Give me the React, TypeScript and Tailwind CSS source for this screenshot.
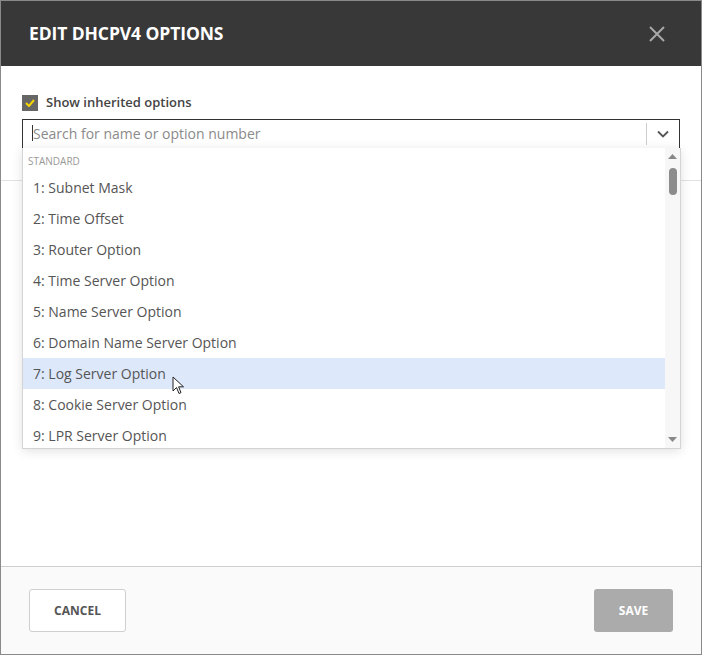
import React from "react";

const items = [
  "1: Subnet Mask",
  "2: Time Offset",
  "3: Router Option",
  "4: Time Server Option",
  "5: Name Server Option",
  "6: Domain Name Server Option",
  "7: Log Server Option",
  "8: Cookie Server Option",
  "9: LPR Server Option",
];

export default function App() {
  return (
    <div
      className="w-[702px] h-[655px] flex flex-col border border-[#8a8a8a] bg-white overflow-hidden"
      style={{ fontFamily: '"Open Sans", "Noto Sans", sans-serif' }}
    >
      <div className="h-[65px] bg-[#383838] flex items-center justify-between pl-[28px] pr-[36px] shrink-0">
        <div className="text-white text-[17.5px] font-bold tracking-[-0.1px]">EDIT DHCPV4 OPTIONS</div>
        <svg width="16" height="16" viewBox="0 0 16 16">
          <path d="M1 1L15 15M15 1L1 15" stroke="#a8a8a8" strokeWidth="2" />
        </svg>
      </div>
      <div className="flex-1 relative">
        <div className="pl-[21px] pr-[21px] pt-[28px]">
          <div className="flex items-center gap-[8px] h-[17px]">
            <div className="w-[16px] h-[16px] bg-[#666] flex items-center justify-center mt-[1px]">
              <svg width="10" height="8" viewBox="0 0 10 8">
                <path d="M1 4L4 7L9 1" stroke="#f5d400" strokeWidth="2" fill="none" />
              </svg>
            </div>
            <span className="text-[13px] font-semibold text-[#444] mt-[1px]">Show inherited options</span>
          </div>
          <div className="mt-[8px] h-[30px] border border-[#333] flex items-center">
            <div className="flex-1 flex items-center pl-[9px] pb-[2px]">
              <div className="w-[1px] h-[16px] bg-[#333]" />
              <span className="text-[14px] text-[#8a8a8a]">Search for name or option number</span>
            </div>
            <div className="w-[1px] h-[22px] bg-[#ccc]" />
            <div className="w-[32px] flex items-center justify-center">
              <svg width="12" height="8" viewBox="0 0 12 8">
                <path d="M1 1.5L6 6.5L11 1.5" stroke="#555" strokeWidth="1.8" fill="none" />
              </svg>
            </div>
          </div>
          <div className="mt-[31px] -mx-[21px] h-[1px] bg-[#e2e2e2]" />
        </div>

        <div className="absolute left-[21px] top-[82px] w-[659px] h-[301px] bg-white border border-[#d4d4d4] border-t-0 shadow-[0_2px_10px_rgba(0,0,0,0.12)] flex overflow-hidden">
          <div className="flex-1 flex flex-col">
            <div className="h-[24px] shrink-0 pl-[5px] pt-[6px] text-[10px] text-[#999] leading-[14px]">STANDARD</div>
            {items.map((t, i) => (
              <div
                key={t}
                className={
                  "h-[31px] shrink-0 flex items-center pl-[10px] text-[14px] text-[#555] " +
                  (i === 6 ? "bg-[#dde8fb] relative" : "")
                }
              >
                {t}
                {i === 6 && (
                  <svg className="absolute left-[149px] top-[18px]" width="13" height="19" viewBox="0 0 13 19">
                    <path d="M1 1L1 15L4.5 11.5L7 17.5L9 16.6L6.6 10.8L11.5 10.8Z" fill="white" stroke="#222" strokeWidth="1" strokeLinejoin="round" />
                  </svg>
                )}
              </div>
            ))}
          </div>
          <div className="w-[15px] bg-[#f7f7f7] flex flex-col items-center justify-between py-[6px]">
            <div className="flex flex-col items-center">
              <svg width="9" height="5" viewBox="0 0 9 5"><path d="M0 5L4.5 0L9 5Z" fill="#888" /></svg>
              <div className="mt-[9px] w-[8px] h-[27px] rounded-full bg-[#8c8c8c]" />
            </div>
            <svg width="9" height="5" viewBox="0 0 9 5"><path d="M0 0L4.5 5L9 0Z" fill="#888" /></svg>
          </div>
        </div>
      </div>
      <div className="h-[88px] shrink-0 border-t border-[#cfcfcf] bg-[#fafafa] flex items-center justify-between pl-[28px] pr-[28px]">
        <button className="w-[97px] h-[43px] border border-[#cfcfcf] rounded-[3px] bg-white text-[12px] font-bold text-[#555]">
          CANCEL
        </button>
        <button className="w-[79px] h-[43px] rounded-[3px] bg-[#ababab] text-[12px] font-bold text-white">
          SAVE
        </button>
      </div>
    </div>
  );
}
